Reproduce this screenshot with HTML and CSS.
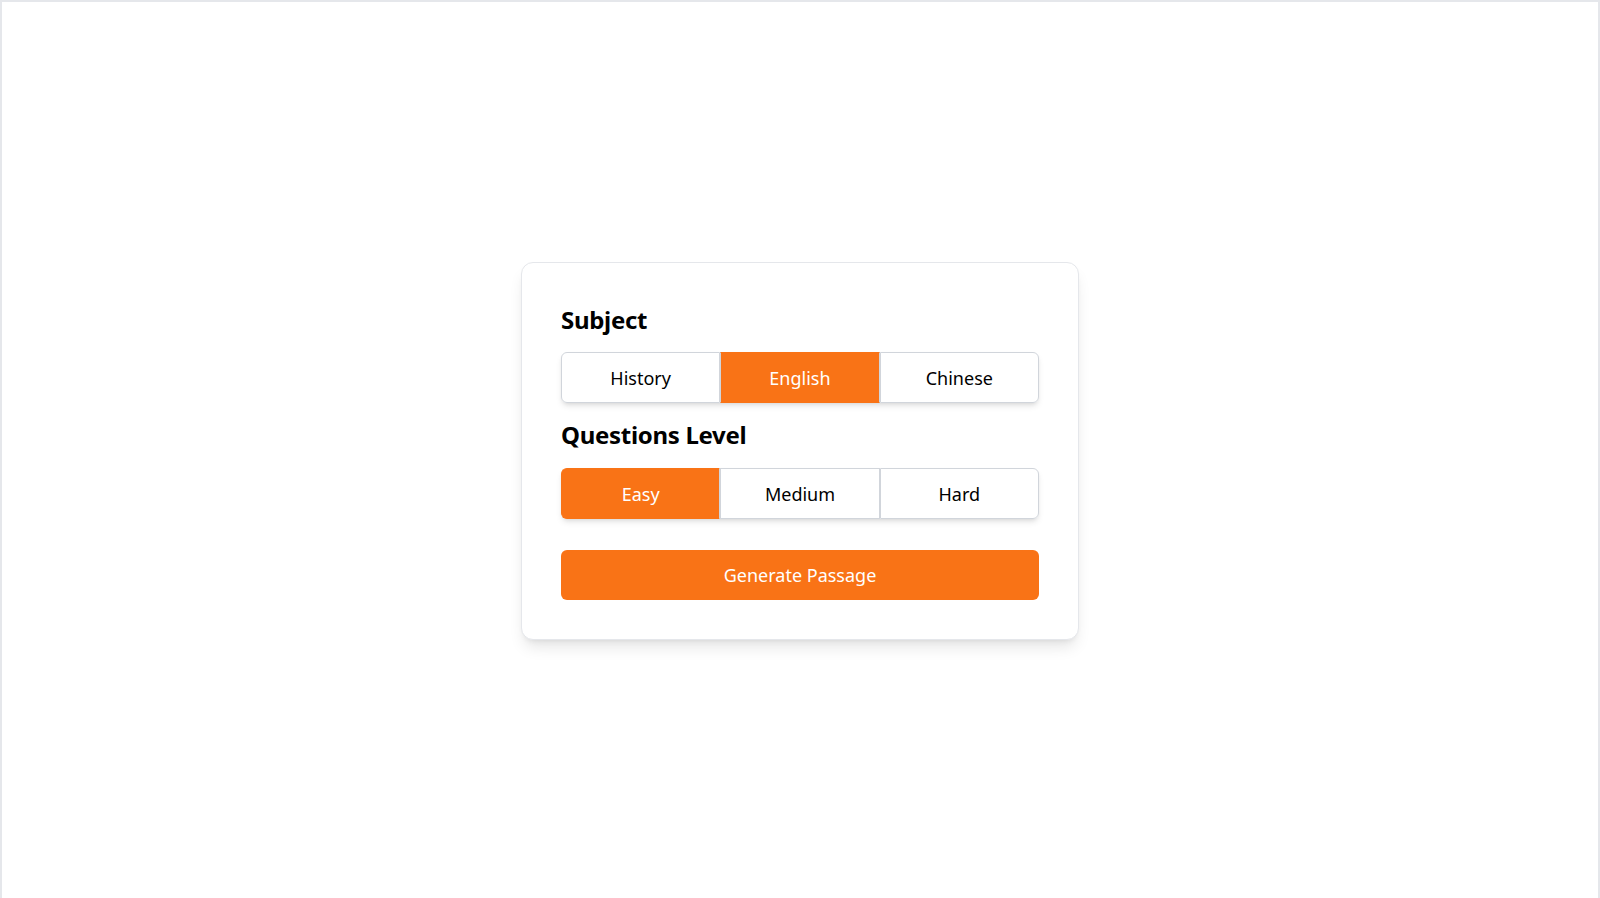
FILE: index.html
```html
<!DOCTYPE html>
<html lang="en">
<head>
<meta charset="utf-8">
<title>Generate Passage</title>
<link rel="stylesheet" href="styles.css">
</head>
<body>
<div class="page">
  <div class="card">
    <h2 class="label label-first">Subject</h2>
    <div class="seg">
      <button class="seg-btn">History</button>
      <button class="seg-btn active">English</button>
      <button class="seg-btn">Chinese</button>
    </div>
    <h2 class="label label-second">Questions Level</h2>
    <div class="seg">
      <button class="seg-btn active">Easy</button>
      <button class="seg-btn">Medium</button>
      <button class="seg-btn">Hard</button>
    </div>
    <button class="generate">Generate Passage</button>
  </div>
</div>
</body>
</html>
```

FILE: styles.css
```css
html, body {
  margin: 0;
  padding: 0;
  background: #ffffff;
}

body {
  font-family: "Noto Sans", "Open Sans", sans-serif;
  color: #000;
}

.page {
  min-height: 100vh;
  border: 2px solid #e5e7eb;
  display: flex;
  align-items: center;
  justify-content: center;
}

.card {
  width: 558px;
  box-sizing: border-box;
  border: 1px solid #e5e7eb;
  border-radius: 12px;
  background: #fff;
  padding: 39px;
  box-shadow: 0 10px 15px -3px rgba(0, 0, 0, 0.1), 0 4px 6px -4px rgba(0, 0, 0, 0.1);
  display: flex;
  flex-direction: column;
}

.label {
  margin: 0;
  font-size: 24px;
  line-height: 36px;
  font-weight: 700;
  letter-spacing: -0.3px;
  color: #000;
}

.label-first {
  margin-bottom: 14px;
}

.label-second {
  margin-top: 14px;
  margin-bottom: 15px;
}

.seg {
  display: flex;
  border-radius: 6px;
  box-shadow: 0 4px 6px -1px rgba(0, 0, 0, 0.1), 0 2px 4px -2px rgba(0, 0, 0, 0.1);
}

.seg-btn {
  flex: 1 1 0;
  height: 51px;
  margin: 0;
  padding: 0;
  border: 1px solid #d1d5db;
  background: #fff;
  color: #000;
  font-family: inherit;
  font-size: 18px;
  cursor: pointer;
}

.seg-btn:first-child {
  border-radius: 6px 0 0 6px;
}

.seg-btn:last-child {
  border-radius: 0 6px 6px 0;
}

.seg-btn.active {
  background: #f97316;
  color: #fff;
  border-top-color: #f97316;
  border-bottom-color: #f97316;
}

.seg-btn.active:first-child {
  border-left-color: #f97316;
}

.seg-btn.active:last-child {
  border-right-color: #f97316;
}

.generate {
  margin-top: 31px;
  height: 50px;
  border: none;
  border-radius: 6px;
  background: #f97316;
  color: #fff;
  font-family: inherit;
  font-size: 18px;
  cursor: pointer;
}
```
